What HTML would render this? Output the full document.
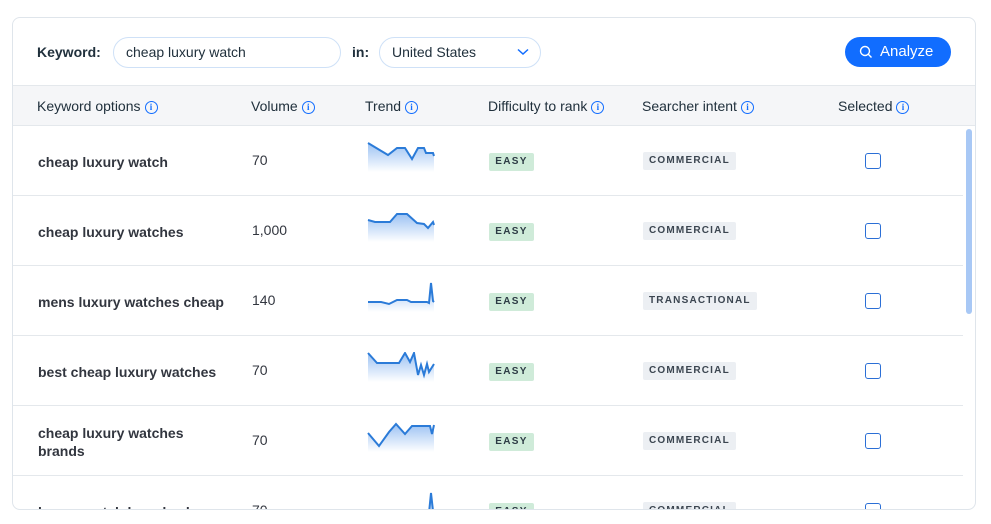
<!DOCTYPE html>
<html><head><meta charset="utf-8"><style>
*{box-sizing:border-box;margin:0;padding:0}
body{width:991px;height:524px;background:#fff;font-family:"Liberation Sans",sans-serif;color:#20303c;position:relative;overflow:hidden}
.card{position:absolute;left:12px;top:17px;width:964px;height:493px;border:1px solid #dfe5eb;border-radius:8px;overflow:hidden;background:#fff}
.abs{position:absolute}
.lbl{font-size:14px;font-weight:bold;color:#20303c}
.inp{border:1px solid #cfe1f7;border-radius:16px;height:31px;font-size:14px;line-height:29px;padding-left:12px;color:#20303c}
.btn{background:#116dff;color:#fff;border-radius:16px;width:106px;height:30px;font-size:15px;line-height:30px}
.thead{position:absolute;left:0;top:67px;width:964px;height:41px;background:#f5f6f8;border-top:1px solid #e4e8ec;border-bottom:1px solid #e4e8ec}
.th{position:absolute;top:11px;font-size:14px;color:#20303c;white-space:nowrap;line-height:18px}
.i{display:inline-block;width:13px;height:13px;border:1.3px solid #116dff;border-radius:50%;color:#116dff;font-size:9px;line-height:10px;text-align:center;font-weight:bold;vertical-align:1px;margin-left:4px;font-family:"Liberation Serif",serif}
.row{position:absolute;left:0;width:950px;height:70px;border-bottom:1px solid #e4e8ec}
.kw{position:absolute;left:25px;font-size:14px;font-weight:bold;color:#32363f;line-height:18px}
.vol{position:absolute;left:239px;top:26px;font-size:14px;color:#32363f}
.easy{position:absolute;left:476px;top:27px;width:45px;height:18px;background:#cfebd9;border-radius:2px;font-size:10px;font-weight:bold;letter-spacing:1.3px;line-height:18px;text-align:center;color:#2d3b45}
.int{position:absolute;left:630px;top:26px;height:18px;background:#eceff3;border-radius:2px;font-size:10px;font-weight:bold;letter-spacing:1.2px;line-height:18px;padding:0 6px;color:#3b4550}
.cb{position:absolute;left:852px;top:27px;width:16px;height:16px;border:1.5px solid #2b6fd6;border-radius:3px}
svg.sp{position:absolute;left:354px;top:16px}
.sb{position:absolute;left:953px;top:111px;width:6px;height:185px;background:#a8c8f5;border-radius:3px}
</style></head><body>
<svg width="0" height="0" style="position:absolute"><defs><linearGradient id="g" x1="0" y1="0" x2="0" y2="1"><stop offset="0" stop-color="#9cc2f3"/><stop offset="1" stop-color="#fff"/></linearGradient></defs></svg>
<div class="card">
<div class="abs lbl" style="left:24px;top:26px">Keyword:</div>
<div class="abs inp" style="left:100px;top:19px;width:228px">cheap luxury watch</div>
<div class="abs lbl" style="left:339px;top:26px">in:</div>
<div class="abs inp" style="left:366px;top:19px;width:162px">United States<svg class="abs" style="left:137px;top:10px" width="12" height="8"><path d="M1 1.5L6 6L11 1.5" fill="none" stroke="#116dff" stroke-width="1.5"/></svg></div>
<div class="abs btn" style="left:832px;top:19px"><svg class="abs" style="left:14px;top:8px" width="14" height="14"><circle cx="6" cy="6" r="4.5" fill="none" stroke="#fff" stroke-width="1.4"/><path d="M9.3 9.3L12.5 12.5" stroke="#fff" stroke-width="1.4"/></svg><span style="position:absolute;left:35px">Analyze</span></div>
<div class="thead">
<div class="th" style="left:24px">Keyword options<span class="i">i</span></div>
<div class="th" style="left:238px">Volume<span class="i">i</span></div>
<div class="th" style="left:352px">Trend<span class="i">i</span></div>
<div class="th" style="left:475px">Difficulty to rank<span class="i">i</span></div>
<div class="th" style="left:629px">Searcher intent<span class="i">i</span></div>
<div class="th" style="left:825px">Selected<span class="i">i</span></div>
</div>

<div class="row" style="top:108px"><div class="kw" style="top:27px">cheap luxury watch</div><div class="vol">70</div>
<svg class="sp" width="68" height="30"><path d="M1 1L21 13L30 6L38 6L45 17L51 6L57 6L59 11L66 11L67 14L67 30L1 30Z" fill="url(#g)"/><path d="M1 1L21 13L30 6L38 6L45 17L51 6L57 6L59 11L66 11L67 14" fill="none" stroke="#2b7bd8" stroke-width="2"/></svg>
<div class="easy">EASY</div><div class="int">COMMERCIAL</div><div class="cb"></div></div>

<div class="row" style="top:178px"><div class="kw" style="top:27px">cheap luxury watches</div><div class="vol">1,000</div>
<svg class="sp" width="68" height="30"><path d="M1 8L8 10L23 10L30 2L40 2L50 11L57 12L61 16L66 10L67 10L67 30L1 30Z" fill="url(#g)"/><path d="M1 8L8 10L23 10L30 2L40 2L50 11L57 12L61 16L66 10L67 13" fill="none" stroke="#2b7bd8" stroke-width="2"/></svg>
<div class="easy">EASY</div><div class="int">COMMERCIAL</div><div class="cb"></div></div>

<div class="row" style="top:248px"><div class="kw" style="top:27px">mens luxury watches cheap</div><div class="vol">140</div>
<svg class="sp" width="68" height="30"><path d="M1 20L14 20L22 22L30 18L40 18L44 20L60 20L62 21L64 1L66 19L67 20L67 30L1 30Z" fill="url(#g)"/><path d="M1 20L14 20L22 22L30 18L40 18L44 20L60 20L62 21L64 1L66 19L67 20" fill="none" stroke="#2b7bd8" stroke-width="2"/></svg>
<div class="easy">EASY</div><div class="int">TRANSACTIONAL</div><div class="cb"></div></div>

<div class="row" style="top:318px"><div class="kw" style="top:27px">best cheap luxury watches</div><div class="vol">70</div>
<svg class="sp" width="68" height="30"><path d="M1 1L10 11L32 11L38 1L43 10L47 1L51 23L54 13L57 23L60 12L62 20L67 12L67 30L1 30Z" fill="url(#g)"/><path d="M1 1L10 11L32 11L38 1L43 10L47 1L51 23L54 13L57 23L60 12L62 20L67 12" fill="none" stroke="#2b7bd8" stroke-width="2"/></svg>
<div class="easy">EASY</div><div class="int">COMMERCIAL</div><div class="cb"></div></div>

<div class="row" style="top:388px"><div class="kw" style="top:18px">cheap luxury watches<br>brands</div><div class="vol">70</div>
<svg class="sp" width="68" height="30"><path d="M1 11L12 24L22 10L29 2L38 12L45 4L58 4L63 4L65 12L67 3L67 30L1 30Z" fill="url(#g)"/><path d="M1 11L12 24L22 10L29 2L38 12L45 4L58 4L63 4L65 12L67 3" fill="none" stroke="#2b7bd8" stroke-width="2"/></svg>
<div class="easy">EASY</div><div class="int">COMMERCIAL</div><div class="cb"></div></div>

<div class="row" style="top:458px;border:none"><div class="kw" style="top:27px">luxury watch brands cheap</div><div class="vol">70</div>
<svg class="sp" width="68" height="30"><path d="M1 20L60 20L62 21L64 1L66 19L67 20L67 30L1 30Z" fill="url(#g)"/><path d="M1 20L60 20L62 21L64 1L66 19L67 20" fill="none" stroke="#2b7bd8" stroke-width="2"/></svg>
<div class="easy">EASY</div><div class="int">COMMERCIAL</div><div class="cb"></div></div>

<div class="sb"></div>
</div>
</body></html>
